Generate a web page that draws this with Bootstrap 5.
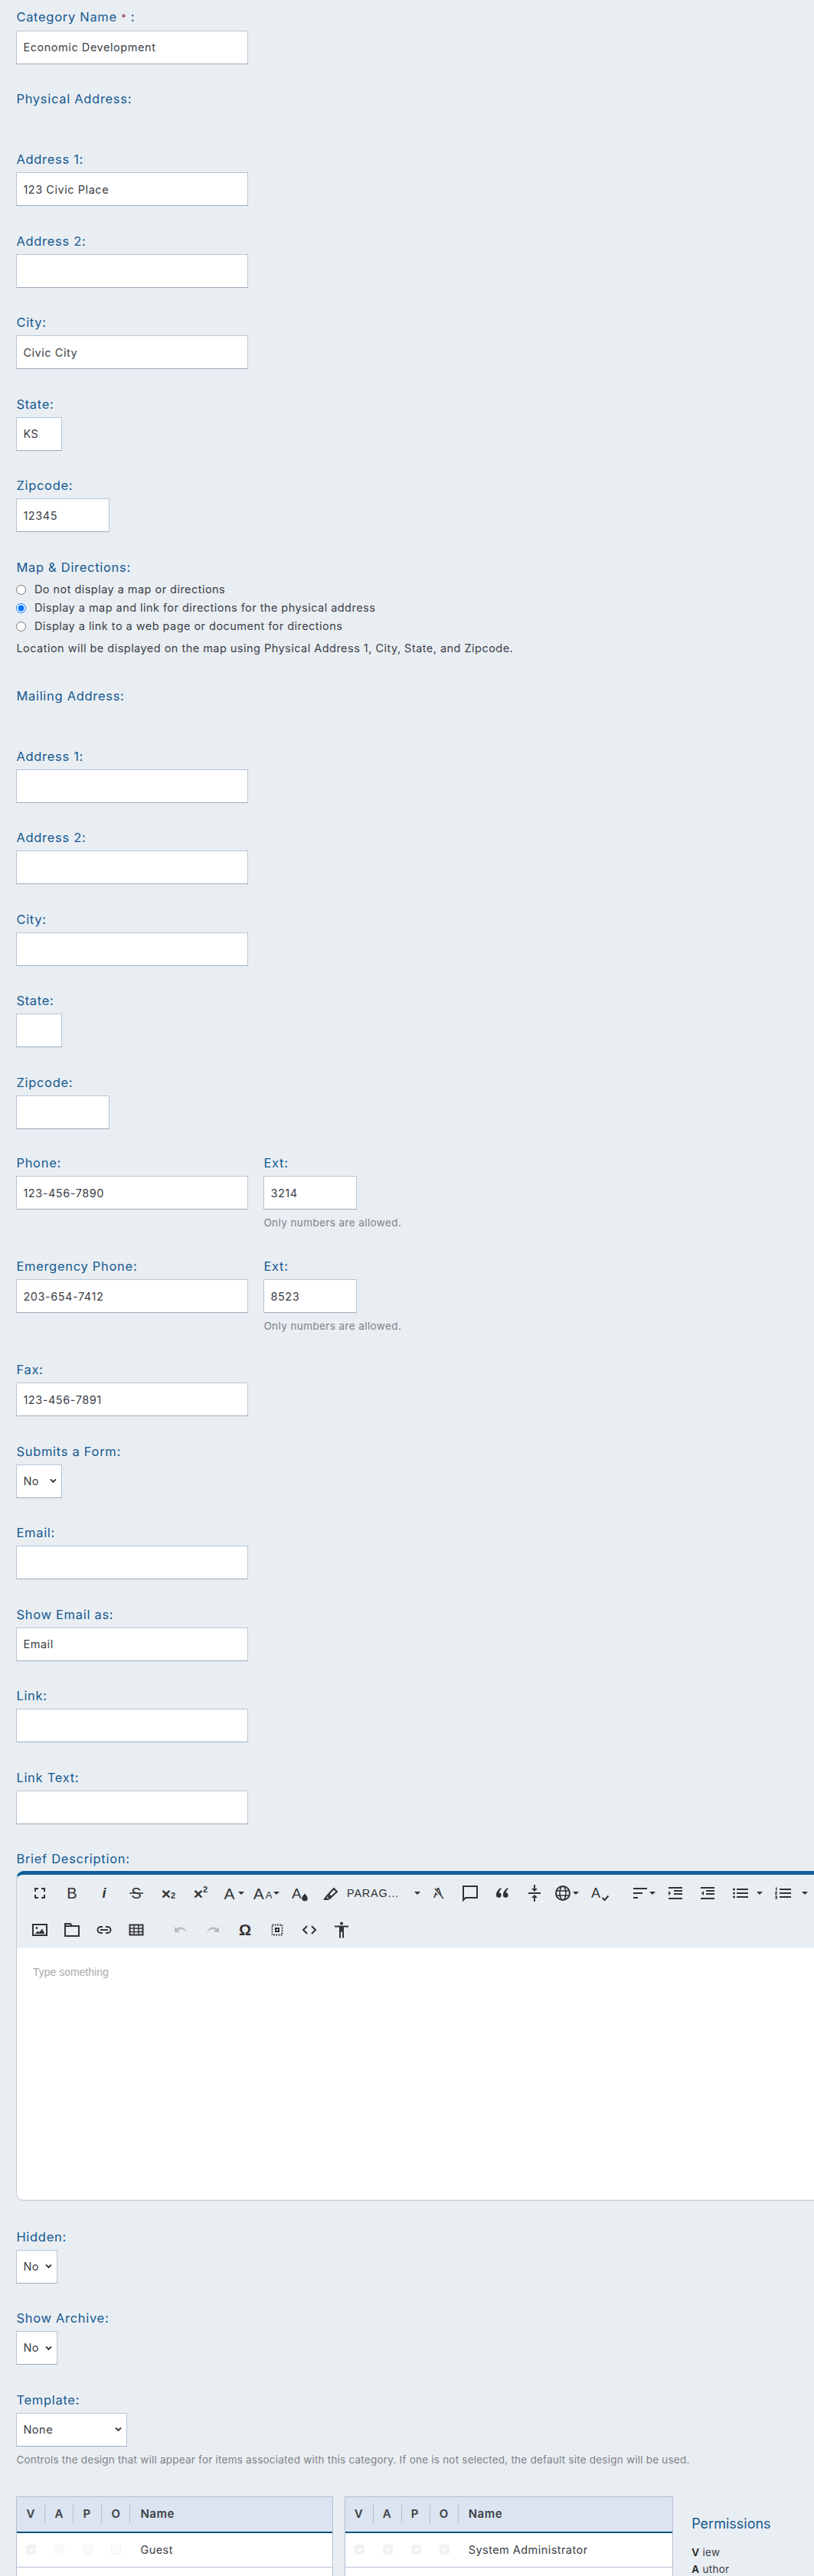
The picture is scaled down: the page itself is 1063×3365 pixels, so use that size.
<!DOCTYPE html>
<html lang="en"><head><meta charset="utf-8"><title>Category</title>
<link href="https://cdn.jsdelivr.net/npm/bootstrap@5.3.0/dist/css/bootstrap.min.css" rel="stylesheet">
<style>
html,body{height:3365px;overflow:hidden}
body{background:#e9eef3;font-family:Inter,"Noto Sans",sans-serif;color:#3b4046}
.pg{padding:9.5px 0 0 21.4px;width:1100px}
.lbl{display:block;font-size:16.5px;line-height:25px;margin:0 0 4px;color:#15598f;letter-spacing:.7px;white-space:nowrap}
.lbl .req{color:#9b3b63;font-size:13px}
.ipt{display:block;height:44px;border:1px solid #b9c6d6;border-bottom-color:#9dabbd;border-radius:0;background-color:#fff;padding:0 8px;font-size:14.5px;letter-spacing:.55px;color:#3b4046;box-shadow:none}
.w303{width:303px}.w122{width:122px}.w60{width:60px}.w54{width:54px}.w145{width:145px}
select.ipt{padding:0 0 0 8px;background-image:url("data:image/svg+xml,%3csvg xmlns='http://www.w3.org/2000/svg' viewBox='0 0 10 8'%3e%3cpath fill='none' stroke='%23333' stroke-width='2.200' d='M1 1.500l4 4 4-4'/%3e%3c/svg%3e");background-position:right 6px center;background-size:9px 7px}
.fld{margin-bottom:33.5px}
.fld.lst{margin-bottom:32.5px}
.hd{margin-bottom:54px}
.ty{margin-bottom:4.5px}
.rad{display:flex;align-items:center;height:24px;font-size:14.5px;letter-spacing:.46px;white-space:nowrap}
.rad input{width:13px;height:13px;margin:0 10.5px 0 0;flex:none}
.note{font-size:14.5px;line-height:24px;letter-spacing:.47px;margin:5px 0 37.5px;white-space:nowrap}
.hlp{font-size:13.5px;line-height:20px;margin:7px 0 35px;color:#7f8286;letter-spacing:.4px;white-space:nowrap}
.hlp.lng{letter-spacing:.22px;margin-bottom:38px}
.two{gap:20px}
.two .fld{margin-bottom:0}
.edtl{margin-bottom:3px}
.edt{width:1100px;height:431px;border-top:5px solid #10609c;border-left:1px solid #c4ccd4;border-bottom:1px solid #c4ccd4;border-radius:10px 0 0 10px;overflow:hidden;margin-bottom:34.5px}
.tbrow{height:48px;padding-left:8.6px}
.tbb{flex:none;width:42px;height:48px;display:flex;align-items:center;justify-content:center;color:#333;font-family:"Liberation Sans",Arial,sans-serif;font-size:20px;line-height:1}
.tbb svg{width:24px;height:24px;flex:none;fill:#333}
.cr{flex:none;width:0;height:0;border:4px solid transparent;border-top-color:#333;border-bottom:0}
.fs sub,.fs sup{font-size:11px;font-weight:700}
.ss{font-weight:700;font-size:21px}
.ita{font-style:italic;font-weight:700;font-size:18px}
.gap1{margin-left:2px}.gap2{margin-left:12px}.gap3{margin-left:16px}
.wpar{width:100px;gap:7px;font-size:14.5px;letter-spacing:.8px}
.bdy{height:328px;background:#fff;padding:21px 0 0 20.5px;font-family:"Liberation Sans",Arial,sans-serif;font-size:14px;line-height:20px;color:#aaa}
.tw{width:413.3px;margin-right:15px;flex:none}.tw2{width:429px;margin-right:24.5px;flex:none}
.ptb{width:100%;border-collapse:separate;border-spacing:0;border:1px solid #b2c0d1;border-bottom:0;background:#fff;table-layout:fixed}
.ptb th{height:47px;background:#dbe4f0;border-bottom:2px solid #0b5184;font-size:15px;letter-spacing:.5px;font-weight:600;color:#3b4046;padding:0;vertical-align:middle}
.ptb .cc{width:37px}
.ptb th span{display:block;height:24px;line-height:24px;padding-left:12px;border-right:1px solid #b2c0d1}
.ptb .nm span{border:0;padding-left:13px}
.ptb td{height:45px;border-bottom:1px solid #b2c0d1;font-size:14.5px;letter-spacing:.45px;padding:0;vertical-align:middle}
.ptb td.cc{padding-left:12px}
.ptb td.nm{padding-left:13px}
.ptb td input{display:block;width:13px;height:13px;margin:0;opacity:1;background-color:#f8f8f8;border:1px solid #e3e3e3;border-radius:3px}
.ptb td input:checked{background-color:#e7e7e7;border-color:#e2e2e2}
.prm{margin-top:24px}
.prm h5{font-size:18px;line-height:24px;margin:0 0 14px;color:#15598f;font-weight:400;white-space:nowrap}
.prm p{font-size:13.5px;line-height:22px;margin:0;letter-spacing:.3px;white-space:nowrap}
.prm b{font-weight:600;color:#222}
</style></head><body>
<div class="pg">
<div class="fld"><label class="lbl">Category Name <span class="req">*</span> :</label><input class="form-control ipt w303" value="Economic Development"></div>
<div class="lbl hd">Physical Address:</div>
<div class="fld"><label class="lbl">Address 1:</label><input class="form-control ipt w303" value="123 Civic Place"></div>
<div class="fld"><label class="lbl">Address 2:</label><input class="form-control ipt w303"></div>
<div class="fld"><label class="lbl">City:</label><input class="form-control ipt w303" value="Civic City"></div>
<div class="fld"><label class="lbl">State:</label><input class="form-control ipt w60" value="KS"></div>
<div class="fld"><label class="lbl">Zipcode:</label><input class="form-control ipt w122" value="12345"></div>
<div class="lbl ty">Map &amp; Directions:</div>
<label class="rad"><input type="radio" name="m">Do not display a map or directions</label>
<label class="rad"><input type="radio" name="m" checked>Display a map and link for directions for the physical address</label>
<label class="rad"><input type="radio" name="m">Display a link to a web page or document for directions</label>
<p class="note">Location will be displayed on the map using Physical Address 1, City, State, and Zipcode.</p>
<div class="lbl hd">Mailing Address:</div>
<div class="fld"><label class="lbl">Address 1:</label><input class="form-control ipt w303"></div>
<div class="fld"><label class="lbl">Address 2:</label><input class="form-control ipt w303"></div>
<div class="fld"><label class="lbl">City:</label><input class="form-control ipt w303"></div>
<div class="fld"><label class="lbl">State:</label><input class="form-control ipt w60"></div>
<div class="fld lst"><label class="lbl">Zipcode:</label><input class="form-control ipt w122"></div>
<div class="d-flex two"><div class="fld"><label class="lbl">Phone:</label><input class="form-control ipt w303" value="123-456-7890"></div><div class="fld"><label class="lbl">Ext:</label><input class="form-control ipt w122" value="3214"><div class="hlp">Only numbers are allowed.</div></div></div>
<div class="d-flex two"><div class="fld"><label class="lbl">Emergency Phone:</label><input class="form-control ipt w303" value="203-654-7412"></div><div class="fld"><label class="lbl">Ext:</label><input class="form-control ipt w122" value="8523"><div class="hlp">Only numbers are allowed.</div></div></div>
<div class="fld"><label class="lbl">Fax:</label><input class="form-control ipt w303" value="123-456-7891"></div>
<div class="fld"><label class="lbl">Submits a Form:</label><select class="form-select ipt w60"><option>No</option></select></div>
<div class="fld"><label class="lbl">Email:</label><input class="form-control ipt w303"></div>
<div class="fld"><label class="lbl">Show Email as:</label><input class="form-control ipt w303" value="Email"></div>
<div class="fld"><label class="lbl">Link:</label><input class="form-control ipt w303"></div>
<div class="fld"><label class="lbl">Link Text:</label><input class="form-control ipt w303"></div>
<div class="lbl edtl">Brief Description:</div>
<div class="edt">
<div class="d-flex tbrow">
<div class="tbb"><svg viewBox="0 0 24 24"><path d="M6 10V6h4M14 6h4v4M18 14v4h-4M10 18H6v-4" fill="none" stroke="#333" stroke-width="2"/></svg></div>
<div class="tbb">B</div>
<div class="tbb ita">i</div>
<div class="tbb position-relative"><span>S</span><svg class="position-absolute" viewBox="0 0 24 24"><path d="M3 12h18" stroke="#333" stroke-width="1.6"/></svg></div>
<div class="tbb fs ss">×<sub>2</sub></div>
<div class="tbb fs ss">×<sup>2</sup></div>
<div class="tbb gap1" style="gap:5px;font-size:21px">A<span class="cr"></span></div>
<div class="tbb" style="gap:2px;font-size:21px">A<span style="font-size:13px;margin-top:4px">A</span><span class="cr"></span></div>
<div class="tbb position-relative" style="font-size:19px;justify-content:flex-start;padding-left:12px">A<svg class="position-absolute" viewBox="0 0 24 24"><path d="M15 12.500c-2 2.600-3.800 4.200-3.800 6.200a3.800 3.800 0 0 0 7.600 0c0-2-1.800-3.600-3.800-6.200z" transform="translate(2 0)"/></svg></div>
<div class="tbb"><svg viewBox="0 0 24 24"><path d="M9 13.500 16 6l4 4-7.500 7z M7.500 15l3.500 3.500-2 1H4z" fill="none" stroke="#333" stroke-width="2"/><path d="M3 21l3-3 3 3z"/></svg></div>
<div class="tbb wpar">PARAG...<span class="cr ms-auto me-1"></span></div>
<div class="tbb position-relative" style="margin-left:-2px;font-size:18px">A<svg class="position-absolute" viewBox="0 0 24 24"><path d="M6 5l13 15" stroke="#e9eef3" stroke-width="3"/><path d="M8 6l11 13" stroke="#333" stroke-width="1.300"/></svg></div>
<div class="tbb"><svg viewBox="0 0 24 24"><path d="M3 3h18v15H6l-3 3z" fill="none" stroke="#333" stroke-width="2"/></svg></div>
<div class="tbb"><svg viewBox="0 0 24 24"><path d="M10 5C6.500 7 4 10.500 4 14.500A3.300 3.300 0 1 0 7.800 11.300C8 9.500 9 7.800 10.800 6.200zM19 5c-3.500 2-6 5.500-6 9.500a3.300 3.300 0 1 0 3.800-3.200c.2-1.800 1.200-3.500 3-5.100z"/></svg></div>
<div class="tbb"><svg viewBox="0 0 24 24"><path d="M4 12h16" stroke="#333" stroke-width="2"/><path d="M11 1h2v5h3l-4 4-4-4h3zM12 14l4 4h-3v5h-2v-5H8z"/></svg></div>
<div class="tbb" style="gap:3px"><svg viewBox="0 0 24 24" style="width:24px"><g fill="none" stroke="#333" stroke-width="2"><circle cx="12" cy="12" r="9"/><ellipse cx="12" cy="12" rx="4" ry="9" stroke-width="1.600"/><path d="M3 9h18M3 15h18" stroke-width="1.600"/></g></svg><span class="cr" style="margin-left:-2px"></span></div>
<div class="tbb position-relative" style="font-size:18px;justify-content:flex-start;padding-left:11px">A<svg class="position-absolute" viewBox="0 0 24 24"><path d="M14.500 18l3 3 5-5.500" fill="none" stroke="#333" stroke-width="2"/></svg></div>
<div class="tbb gap2" style="width:46px;gap:0;justify-content:flex-start;padding-left:9px"><svg viewBox="0 0 24 24"><path d="M3 6h18M3 12h12M3 18h6" stroke="#333" stroke-width="2"/></svg><span class="cr"></span></div>
<div class="tbb"><svg viewBox="0 0 24 24"><path d="M3 4h18v2H3zM10 8h11v2H10zM10 12h11v2H10zM3 18h18v2H3zM3 9l3 3-3 3z"/></svg></div>
<div class="tbb"><svg viewBox="0 0 24 24"><path d="M3 4h18v2H3zM10 8h11v2H10zM10 12h11v2H10zM3 18h18v2H3zM7 9l-3 3 3 3z"/></svg></div>
<div class="tbb" style="width:58px;justify-content:flex-start;padding-left:9px;gap:10px"><svg viewBox="0 0 24 24"><path d="M8 6h15v2H8zM8 11h15v2H8zM8 16h15v2H8z"/><circle cx="4.500" cy="7" r="1.500"/><circle cx="4.500" cy="12" r="1.500"/><circle cx="4.500" cy="17" r="1.500"/></svg><span class="cr"></span></div>
<div class="tbb" style="width:56px;justify-content:flex-start;padding-left:6px;gap:14px"><svg viewBox="0 0 24 24"><path d="M9 6h15v2H9zM9 11h15v2H9zM9 16h15v2H9z"/><path d="M4 4.500h1.500v4H4zM3 10h3v1.500l-2 1.500h2v1H3v-1.500l2-1.500H3zM3 15.500h3v4H3v-1h2v-.5H3.800v-.8H5v-.7H3z"/></svg><span class="cr"></span></div>
</div>
<div class="d-flex tbrow">
<div class="tbb"><svg viewBox="0 0 24 24"><path d="M3 5h18v14H3z" fill="none" stroke="#333" stroke-width="2"/><circle cx="8" cy="9.500" r="1.400"/><path d="M5.500 17l4-3.500 2 1.500 3.500-4.500 3.500 6.500z"/></svg></div>
<div class="tbb"><svg viewBox="0 0 24 24"><path d="M3 4h7l2 3h9v13H3z" fill="none" stroke="#333" stroke-width="2"/><path d="M3 7h18" stroke="#333" stroke-width="2"/></svg></div>
<div class="tbb"><svg viewBox="0 0 24 24"><path d="M10 8H7.500a4 4 0 0 0 0 8H10M14 8h2.500a4 4 0 0 1 0 8H14M7 12h10" fill="none" stroke="#333" stroke-width="2"/></svg></div>
<div class="tbb"><svg viewBox="0 0 24 24"><path d="M3.500 5.500h17v13h-17z" fill="none" stroke="#333" stroke-width="2"/><path d="M3 10h18M3 14.500h18M9 6v12M15 6v12" stroke="#333" stroke-width="1.500"/></svg></div>
<div class="tbb gap3"><svg viewBox="0 0 24 24"><path d="M4 8v7h7l-2.500-2.500C10 11.300 12 11 13.500 11.300c2.500.4 5 1.700 6.500 4.700-.8-4-3.500-7-7.500-7.500-2-.2-4 .4-5.800 1.800z" fill="#bbb"/></svg></div>
<div class="tbb"><svg viewBox="0 0 24 24"><path d="M20 8v7h-7l2.500-2.500C14 11.300 12 11 10.500 11.300c-2.500.4-5 1.700-6.500 4.700.8-4 3.500-7 7.500-7.500 2-.2 4 .4 5.800 1.800z" fill="#bbb"/></svg></div>
<div class="tbb fw-bold" style="font-size:20px">Ω</div>
<div class="tbb"><svg viewBox="0 0 24 24"><path d="M5.500 5.500h13v13h-13z" fill="none" stroke="#333" stroke-width="1.800" stroke-dasharray="1.800 1.450"/><path d="M9 9h6v6H9z M11 11v2h2v-2z" fill-rule="evenodd"/></svg></div>
<div class="tbb"><svg viewBox="0 0 24 24"><path d="M9 7l-5 5 5 5M15 7l5 5-5 5" fill="none" stroke="#333" stroke-width="2"/></svg></div>
<div class="tbb"><svg viewBox="0 0 24 24"><circle cx="12" cy="3.500" r="2"/><path d="M3 6.500h18v2h-6v14h-2v-8h-2v8H9v-14H3z"/></svg></div>
</div>
<div class="bdy">Type something</div>
</div>
<div class="fld"><label class="lbl">Hidden:</label><select class="form-select ipt w54"><option>No</option></select></div>
<div class="fld"><label class="lbl">Show Archive:</label><select class="form-select ipt w54"><option>No</option></select></div>
<div class="fld mb-0"><label class="lbl">Template:</label><select class="form-select ipt w145"><option>None</option></select></div>
<div class="hlp lng">Controls the design that will appear for items associated with this category. If one is not selected, the default site design will be used.</div>
<div class="d-flex">
<div class="tw"><table class="ptb"><thead><tr><th class="cc"><span>V</span></th><th class="cc"><span>A</span></th><th class="cc"><span>P</span></th><th class="cc"><span>O</span></th><th class="nm"><span>Name</span></th></tr></thead><tbody>
<tr><td class="cc"><input class="form-check-input" type="checkbox" checked disabled></td><td class="cc"><input class="form-check-input" type="checkbox" disabled></td><td class="cc"><input class="form-check-input" type="checkbox" disabled></td><td class="cc"><input class="form-check-input" type="checkbox" disabled></td><td class="nm">Guest</td></tr>
<tr><td colspan="5"></td></tr></tbody></table></div>
<div class="tw2"><table class="ptb"><thead><tr><th class="cc"><span>V</span></th><th class="cc"><span>A</span></th><th class="cc"><span>P</span></th><th class="cc"><span>O</span></th><th class="nm"><span>Name</span></th></tr></thead><tbody>
<tr><td class="cc"><input class="form-check-input" type="checkbox" checked disabled></td><td class="cc"><input class="form-check-input" type="checkbox" checked disabled></td><td class="cc"><input class="form-check-input" type="checkbox" checked disabled></td><td class="cc"><input class="form-check-input" type="checkbox" checked disabled></td><td class="nm">System Administrator</td></tr>
<tr><td colspan="5"></td></tr></tbody></table></div>
<div class="prm"><h5>Permissions</h5><p><b>V</b> iew</p><p><b>A</b> uthor</p></div>
</div>
</div>
<script src="https://cdn.jsdelivr.net/npm/bootstrap@5.3.0/dist/js/bootstrap.bundle.min.js"></script>
</body></html>
